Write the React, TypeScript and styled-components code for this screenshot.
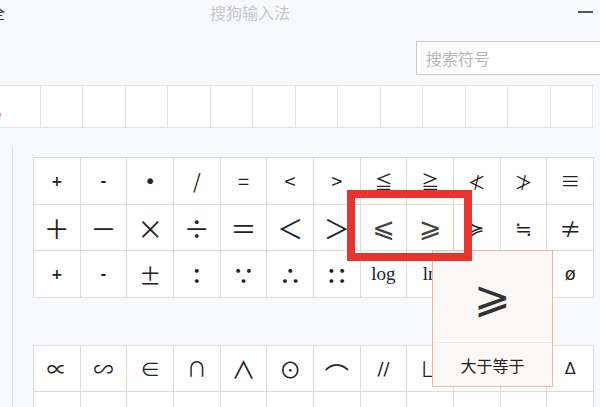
import React, { FunctionComponent } from 'react';
import styled, { createGlobalStyle } from 'styled-components';

const GlobalStyle = createGlobalStyle`
  html, body {
    margin: 0;
    padding: 0;
    background: #f7f9fc;
  }
`;

const symbolFont = `"Noto Sans CJK JP", "DejaVu Sans", sans-serif`;
const plainFont = `"DejaVu Sans", "Noto Sans CJK JP", sans-serif`;
const cjkFont = `"Noto Sans CJK SC", "Noto Sans", sans-serif`;

const Page = styled.div`
  position: relative;
  width: 600px;
  height: 407px;
  overflow: hidden;
  background: #f7f9fc;
  font-family: ${cjkFont};
`;

const TitleBar = styled.div`
  display: flex;
  align-items: center;
  height: 24px;
`;

const AppIcon = styled.span`
  margin-left: -11px;
  width: 40px;
  font-size: 16px;
  color: #333;
`;

const Title = styled.div`
  margin-left: 181px;
  font-size: 16px;
  color: #c8c8c8;
`;

const Minimize = styled.div`
  margin-left: auto;
  margin-right: 7px;
  width: 15px;
  height: 2px;
  background: #555;
`;

const SearchRow = styled.div`
  display: flex;
  justify-content: flex-end;
  margin-top: 17px;
  height: 34px;
`;

const SearchBox = styled.div`
  flex: none;
  box-sizing: border-box;
  width: 200px;
  margin-right: -16px;
  height: 34px;
  border: 1px solid #c9c9c9;
  background: #fff;
  padding-left: 9px;
  font-size: 16px;
  line-height: 32px;
  color: #b5b5b5;
`;

const Strip = styled.div`
  display: grid;
  grid-template-columns: repeat(14, 42.5px);
  margin-top: 10px;
  margin-left: -2px;
  height: 43px;
  width: 596px;
  box-sizing: border-box;
  border-top: 1px solid #e4e4e4;
  border-bottom: 1px solid #e4e4e4;
  background: #fff;
`;

const StripCell = styled.div`
  position: relative;
  border-right: 1px solid #e4e4e4;
`;

const StripMark = styled.span`
  position: absolute;
  left: 0;
  bottom: 4px;
  font-size: 10px;
  color: #e06060;
  font-family: ${plainFont};
`;

const Main = styled.div`
  margin-top: 19px;
  margin-left: 12px;
  border-left: 1px solid #dedede;
  padding: 10px 0 0 20px;
  height: 300px;
`;

const Grid = styled.div<{ $gapBelow?: number }>`
  display: grid;
  grid-template-columns: repeat(12, 1fr);
  width: 561px;
  box-sizing: border-box;
  border-top: 1px solid #dcdcdc;
  border-left: 1px solid #dcdcdc;
  background: #fff;
  margin-bottom: ${(p) => p.$gapBelow ?? 0}px;
`;

const Cell = styled.div<{
  $size: number;
  $font?: string;
  $hover?: boolean;
  $weight?: number;
  $drop?: number;
  $ink?: string;
}>`
  display: flex;
  align-items: center;
  justify-content: center;
  box-sizing: border-box;
  height: 46.5px;
  padding-top: ${(p) => p.$drop ?? 0}px;
  border-right: 1px solid ${(p) => (p.$hover ? '#f0c4b0' : '#dcdcdc')};
  border-bottom: 1px solid #dcdcdc;
  font-family: ${(p) => p.$font ?? symbolFont};
  font-size: ${(p) => p.$size}px;
  font-weight: ${(p) => p.$weight ?? 400};
  color: ${(p) => p.$ink ?? '#222'};
`;

const Highlight = styled.div`
  position: absolute;
  left: 347px;
  top: 190px;
  width: 125px;
  height: 71px;
  box-sizing: border-box;
  border: 8px solid #e8332f;
  z-index: 3;
`;

const Popup = styled.div`
  position: absolute;
  left: 432px;
  top: 250px;
  width: 121px;
  height: 137px;
  box-sizing: border-box;
  border: 1px solid #f1b7a6;
  background: #fcf8f6;
  display: flex;
  flex-direction: column;
  z-index: 2;
`;

const PopupSymbol = styled.div`
  height: 91px;
  display: flex;
  align-items: center;
  justify-content: center;
  font-family: ${plainFont};
  font-size: 44px;
  color: #333;
  border-bottom: 1px solid #f0e6e2;
`;

const PopupLabel = styled.div`
  flex: 1;
  display: flex;
  align-items: center;
  justify-content: center;
  font-size: 16px;
  color: #222;
`;

type Sym = { t: string; size: number; font?: string; hover?: boolean; weight?: number; drop?: number; ink?: string };

const s = (t: string, size: number, extra: Partial<Sym> = {}): Sym => ({ t, size, ...extra });
const serif = `"Liberation Serif", serif`;
const small = { font: plainFont, weight: 700 };
const slanted = { font: plainFont, ink: '#444' };

const rows: Sym[][] = [
  [
    s('+', 14, small), s('-', 14, small), s('•', 20, { font: plainFont }),
    s('/', 20), s('=', 20), s('<', 20), s('>', 20), s('≦', 18), s('≧', 18), s('≮', 18), s('≯', 18), s('≡', 20),
  ],
  [
    s('＋', 26), s('－', 26), s('×', 26), s('÷', 26), s('＝', 26), s('＜', 26),
    s('＞', 26), s('⩽', 27, slanted), s('⩾', 27, { ...slanted, hover: true }),
    s('≽', 18), s('≒', 20), s('≠', 22),
  ],
  [
    s('+', 14, small), s('-', 14, small), s('±', 22), s('∶', 22, { weight: 700 }),
    s('∵', 22, { weight: 700 }), s('∴', 22, { weight: 700 }), s('∷', 22, { weight: 700 }),
    s('log', 19, { font: serif }), s('ln', 19, { font: serif }), s('lg', 19, { font: serif }), s('∞', 18), s('ø', 18, { font: plainFont }),
  ],
];

const lowerRows: Sym[][] = [
  [
    s('∝', 20), s('∽', 20), s('∈', 20), s('∩', 20), s('∧', 24), s('⊙', 22),
    s('⌒', 24, { drop: 12 }), s('//', 18, { font: plainFont }), s('∟', 20), s('∠', 20), s('⊥', 20), s('Δ', 16, { font: plainFont }),
  ],
  [
    s('', 20), s('', 20), s('', 20), s('', 20), s('∵', 22, { weight: 700 }), s('', 20),
    s('˙', 20), s('', 20), s('˙', 20), s('ˆ', 20), s('', 20), s('', 20),
  ],
];

const SymbolGrid: FunctionComponent<{ rows: Sym[][]; gapBelow?: number }> = ({ rows, gapBelow }) => (
  <Grid $gapBelow={gapBelow}>
    {rows.flat().map((sym, i) => (
      <Cell
        key={sym.t + i}
        $size={sym.size}
        $font={sym.font}
        $hover={sym.hover}
        $weight={sym.weight}
        $drop={sym.drop}
        $ink={sym.ink}
      >
        {sym.t}
      </Cell>
    ))}
  </Grid>
);

const App: FunctionComponent = () => {
  return (
    <>
      <GlobalStyle />
      <Page>
        <TitleBar>
          <AppIcon>全</AppIcon>
          <Title>搜狗输入法</Title>
          <Minimize />
        </TitleBar>
        <SearchRow>
          <SearchBox>搜索符号</SearchBox>
        </SearchRow>
        <Strip>
          {Array.from({ length: 14 }).map((_, i) => (
            <StripCell key={i}>{i === 0 ? <StripMark>/</StripMark> : null}</StripCell>
          ))}
        </Strip>
        <Main>
          <SymbolGrid rows={rows} gapBelow={47} />
          <SymbolGrid rows={lowerRows} />
        </Main>
        <Highlight />
        <Popup>
          <PopupSymbol>⩾</PopupSymbol>
          <PopupLabel>大于等于</PopupLabel>
        </Popup>
      </Page>
    </>
  );
};

export default App;
